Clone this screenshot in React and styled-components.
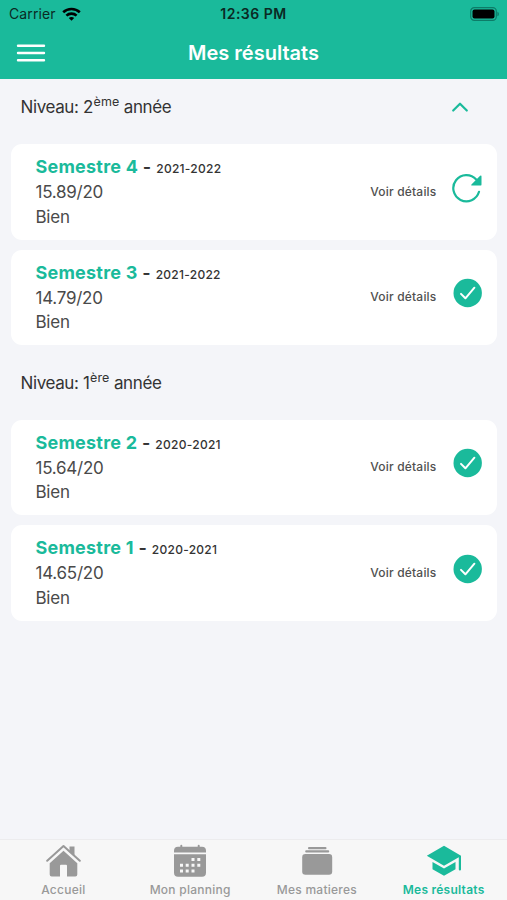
import React from "react";
import styled, { createGlobalStyle } from "styled-components";

const GREEN = "#1aba9b";

const GlobalStyle = createGlobalStyle`
  * {
    box-sizing: border-box;
  }
  body {
    margin: 0;
    background: #f4f5f9;
    font-family: Inter, "Liberation Sans", sans-serif;
    color: #333;
  }
  svg {
    display: block;
  }
`;

const Screen = styled.div`
  height: 900px;
  display: flex;
  flex-direction: column;
  overflow: hidden;
`;

const Top = styled.header`
  height: 79px;
  flex: none;
  background: ${GREEN};
`;

const StatusBar = styled.div`
  height: 27px;
  padding: 0 8px;
  display: grid;
  grid-template-columns: 1fr auto 1fr;
  align-items: center;
  color: #0a2a24;
  font-size: 14px;
`;

const Carrier = styled.div`
  display: flex;
  align-items: center;
  gap: 6px;
  padding-left: 1px;
  letter-spacing: 0.1px;
`;

const Clock = styled.div`
  font-weight: 600;
  letter-spacing: 0.5px;
`;

const Battery = styled.div`
  justify-self: end;
`;

const NavBar = styled.div`
  height: 52px;
  padding: 0 16px;
  display: grid;
  grid-template-columns: 1fr auto 1fr;
  align-items: center;
`;

const Title = styled.h1`
  margin: 0 0 1px;
  color: #fff;
  font-size: 20px;
  font-weight: 600;
  letter-spacing: 0;
`;

const Content = styled.main`
  flex: 1;
`;

const LevelHeader = styled.div`
  height: ${(props) => props.$height}px;
  padding: ${(props) => props.$top}px 38px ${(props) => props.$bottom}px 20.5px;
  display: flex;
  align-items: center;
  justify-content: space-between;
`;

const LevelTitle = styled.div`
  font-size: 17px;
  line-height: 24px;
  letter-spacing: -0.38px;

  sup {
    margin-left: 0.6px;
    font-size: 12.5px;
    line-height: 0;
    letter-spacing: 0.1px;
  }
`;

const CardList = styled.div`
  padding: 0 10px 0 11px;
  display: flex;
  flex-direction: column;
  gap: 10px;
`;

const Card = styled.div`
  height: 95.5px;
  padding: 0 15px 0 24.5px;
  display: flex;
  align-items: center;
  background: #fff;
  border-radius: 11px;
`;

const Infos = styled.div`
  flex: 1;
  margin-top: -1px;
  line-height: 24.5px;
  font-size: 17px;
  letter-spacing: -0.25px;
  color: #4a4a4a;
`;

const Semester = styled.div`
  margin: 1.5px 0 -1.5px;
  font-size: 18px;
  font-weight: 600;
  letter-spacing: 0.22px;
  color: #333;

  strong {
    font-weight: 700;
    color: ${GREEN};
  }
`;

const Year = styled.span`
  font-size: 12px;
  font-weight: 500;
  letter-spacing: 0.28px;
`;

const Details = styled.span`
  margin: -1px 15.5px 0 0;
  font-size: 12px;
  font-weight: 500;
  letter-spacing: 0.2px;
  color: #505050;
`;

const StateIcon = styled.div`
  margin-bottom: 8px;
`;

const TabBar = styled.nav`
  height: 61px;
  flex: none;
  display: grid;
  grid-template-columns: repeat(4, 1fr);
  background: #f7f7f7;
  border-top: 1px solid #ececee;
`;

const Tab = styled.div`
  display: flex;
  flex-direction: column;
  align-items: center;
  padding-top: 3px;
  color: ${(props) => (props.$active ? GREEN : "#999")};
`;

const TabLabel = styled.span`
  margin-top: 3px;
  font-size: 12px;
  line-height: 16px;
  font-weight: ${(props) => (props.$active ? 600 : 500)};
  letter-spacing: 0.25px;
`;

const WifiIcon = () => (
  <svg width="19" height="14" viewBox="0 0 19 14" fill="none" stroke="#000" strokeWidth="2.6">
    <path d="M1.2 5.2C5.8.9 13.2.9 17.8 5.2" />
    <path d="M4.4 8.6c2.8-2.6 7.4-2.6 10.2 0" />
    <path d="M9.5 13.8 6.8 11c1.5-1.4 3.9-1.4 5.4 0z" fill="#000" stroke="none" />
  </svg>
);

const BatteryIcon = () => (
  <svg width="29" height="14" viewBox="0 0 29 14">
    <rect x="0.7" y="0.7" width="25.6" height="12.6" rx="3.6" fill="none" stroke="#0d7c68" strokeWidth="1.2" />
    <rect x="2.5" y="2.5" width="22" height="9" rx="2" fill="#000" />
    <path d="M27.4 4.7c2 .7 2 3.9 0 4.6z" fill="#0d7c68" />
  </svg>
);

const MenuIcon = () => (
  <svg width="30" height="20" viewBox="0 0 30 20" stroke="#fff" strokeWidth="2.4" strokeLinecap="round">
    <path d="M2 2.8h26M2 10h26M2 17.2h26" />
  </svg>
);

const ChevronUp = () => (
  <svg width="18" height="12" viewBox="0 0 18 12" fill="none" stroke={GREEN} strokeWidth="2.2" strokeLinecap="round" strokeLinejoin="round">
    <path d="M2.2 9.5 9 2.7l6.8 6.8" />
  </svg>
);

const ReloadIcon = () => (
  <svg width="30" height="30" viewBox="0 0 30 30">
    <path d="M24.2 6.5A13.1 13.1 0 1 0 27 18.8" fill="none" stroke={GREEN} strokeWidth="2.2" strokeLinecap="round" />
    <path d="M29.5 3.4v8q0 1.200-1.200 1.200h-8q-1.900 0-.6-1.400l8.400-8.400q1.400-1 1.400.6z" fill={GREEN} />
  </svg>
);

const CheckIcon = () => (
  <svg width="30" height="30" viewBox="0 0 30 30">
    <circle cx="15.7" cy="15" r="14.2" fill={GREEN} />
    <path d="M9 15.9l4.4 4.4 9-10.600" fill="none" stroke="#fff" strokeWidth="2" strokeLinecap="round" strokeLinejoin="round" />
  </svg>
);

const HomeIcon = () => (
  <svg width="36" height="36" viewBox="0 0 36 36" fill="currentColor">
    <path d="M18.500 7.800 4.700 20.200V31.500q0 2 2 2H15V22.700q0-1 1-1h5q1 0 1 1V33.500h8.300q2 0 2-2V20.200z" />
    <path d="M2.200 17.800 18.500 3l16.300 14.800" fill="none" stroke="currentColor" strokeWidth="2" strokeLinecap="round" strokeLinejoin="round" />
    <path d="M24.500 3.500h5v10l-5-4.600z" />
  </svg>
);

const CalendarIcon = () => (
  <svg width="36" height="36" viewBox="0 0 36 36">
    <path d="M6 3.800h2.300V2.700q0-1 1-1t1 1v1.100h15.400V2.700q0-1 1-1t1 1v1.100H30q4 0 4 4v1.700H2V7.800q0-4 4-4z" fill="currentColor" />
    <path d="M2 11.300h32v18.400q0 4-4 4H6q-4 0-4-4z" fill="currentColor" />
    <path
      d="M19.500 15h3v3h-3zM25.300 15h3v3h-3zM8 20.700h3v3H8zM13.700 20.700h3v3h-3zM19.500 20.700h3v3h-3zM25.300 20.700h3v3h-3zM8 26.400h3v3H8zM13.700 26.400h3v3h-3zM19.500 26.400h3v3h-3z"
      fill="#f7f7f7"
    />
  </svg>
);

const AlbumsIcon = () => (
  <svg width="36" height="36" viewBox="0 0 36 36" fill="currentColor">
    <rect x="9" y="4" width="18.5" height="2.2" rx="1" />
    <rect x="6.2" y="7.3" width="24" height="2.3" rx="1" />
    <rect x="3.2" y="11" width="30" height="20.8" rx="3.2" />
  </svg>
);

const SchoolIcon = () => (
  <svg width="36" height="36" viewBox="0 0 36 36" fill="currentColor">
    <path d="M18 2.800.8 12.800 18 22.800l14.800-8.600V26.500q0 1 1.100 1t1.100-1V12.800z" />
    <path d="M6.500 18.900v7.300L18 32.800l11.500-6.600v-7.300L18 25.600z" />
  </svg>
);

const levels = [
  {
    number: "2",
    suffix: "ème",
    open: true,
    height: 65,
    top: 0,
    bottom: 9,
    semesters: [
      { name: "Semestre 4", year: "2021-2022", average: "15.89/20", mention: "Bien", pending: true },
      { name: "Semestre 3", year: "2021-2022", average: "14.79/20", mention: "Bien" },
    ],
  },
  {
    number: "1",
    suffix: "ère",
    height: 74.5,
    top: 1,
    bottom: 0,
    semesters: [
      { name: "Semestre 2", year: "2020-2021", average: "15.64/20", mention: "Bien" },
      { name: "Semestre 1", year: "2020-2021", average: "14.65/20", mention: "Bien" },
    ],
  },
];

const tabs = [
  { label: "Accueil", Icon: HomeIcon },
  { label: "Mon planning", Icon: CalendarIcon },
  { label: "Mes matieres", Icon: AlbumsIcon },
  { label: "Mes résultats", Icon: SchoolIcon, active: true },
];

const SemesterCard = ({ name, year, average, mention, pending }) => (
  <Card>
    <Infos>
      <Semester>
        <strong>{name}</strong> - <Year>{year}</Year>
      </Semester>
      <div>{average}</div>
      <div>{mention}</div>
    </Infos>
    <Details>Voir détails</Details>
    <StateIcon>{pending ? <ReloadIcon /> : <CheckIcon />}</StateIcon>
  </Card>
);

const App = () => (
  <>
    <GlobalStyle />
    <Screen>
      <Top>
        <StatusBar>
          <Carrier>
            Carrier <WifiIcon />
          </Carrier>
          <Clock>12:36 PM</Clock>
          <Battery>
            <BatteryIcon />
          </Battery>
        </StatusBar>
        <NavBar>
          <MenuIcon />
          <Title>Mes résultats</Title>
        </NavBar>
      </Top>
      <Content>
        {levels.map((level) => (
          <section key={level.number}>
            <LevelHeader $height={level.height} $top={level.top} $bottom={level.bottom}>
              <LevelTitle>
                Niveau: {level.number}
                <sup>{level.suffix}</sup> année
              </LevelTitle>
              {level.open && <ChevronUp />}
            </LevelHeader>
            <CardList>
              {level.semesters.map((semester) => (
                <SemesterCard key={semester.name} {...semester} />
              ))}
            </CardList>
          </section>
        ))}
      </Content>
      <TabBar>
        {tabs.map(({ label, Icon, active }) => (
          <Tab key={label} $active={active}>
            <Icon />
            <TabLabel $active={active}>{label}</TabLabel>
          </Tab>
        ))}
      </TabBar>
    </Screen>
  </>
);

export default App;
